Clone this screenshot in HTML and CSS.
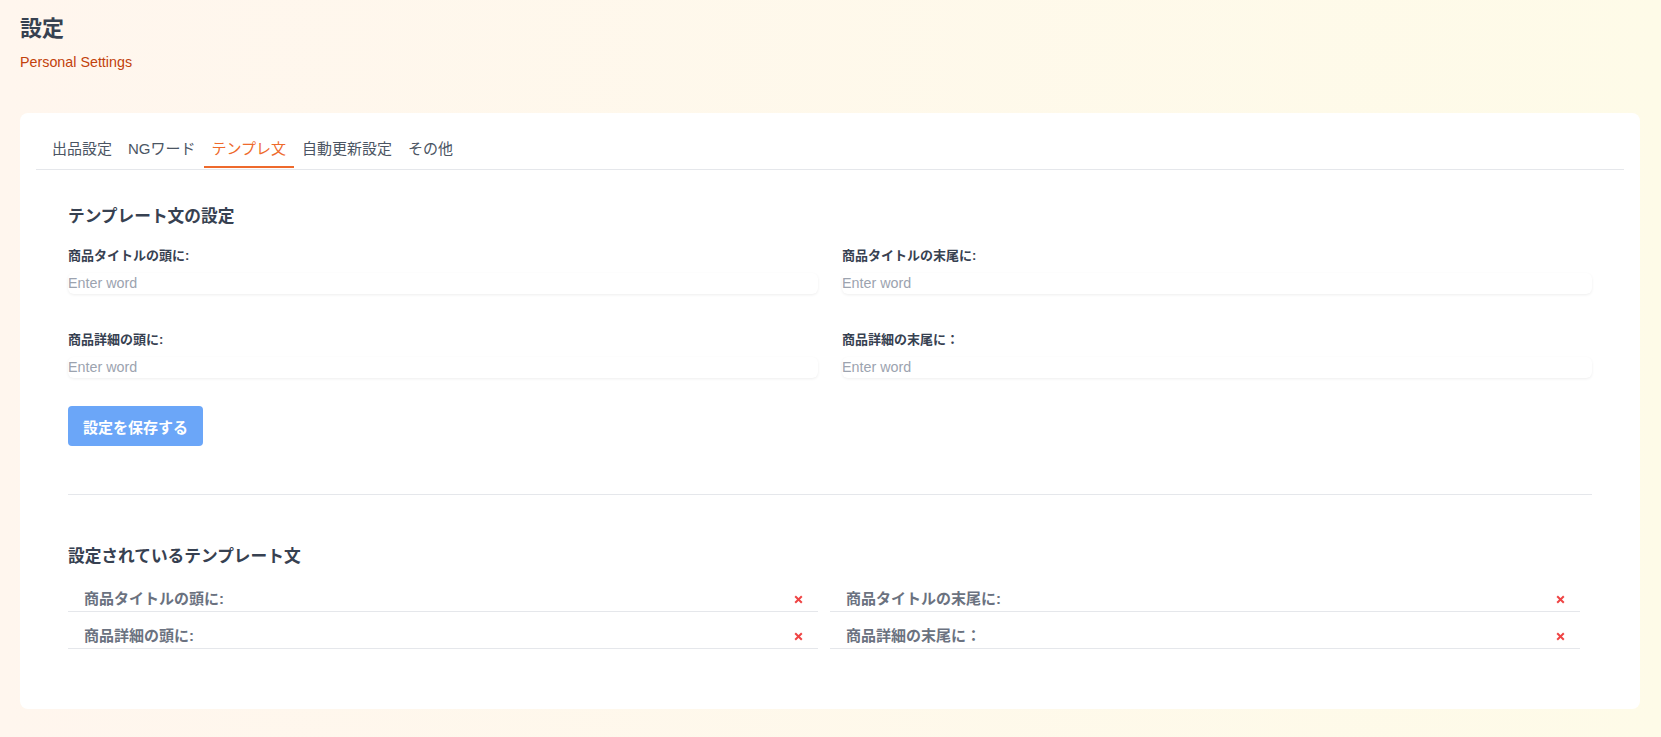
FILE: index.html
```html
<!DOCTYPE html>
<html lang="ja">
<head>
    <meta charset="UTF-8">
    <meta name="viewport" content="width=device-width, initial-scale=1.0">
    <title>設定</title>
    <link rel="stylesheet" href="styles.css">
</head>
<body>
    <div class="page">
        <h1>設定</h1>
        <p class="subtitle">Personal Settings</p>

        <div class="card">
            <div class="tabs">
                <div class="tab">出品設定</div>
                <div class="tab">NGワード</div>
                <div class="tab active">テンプレ文</div>
                <div class="tab">自動更新設定</div>
                <div class="tab">その他</div>
            </div>

            <div class="content">
                <h2>テンプレート文の設定</h2>

                <div class="form-grid">
                    <div class="field">
                        <label>商品タイトルの頭に:</label>
                        <input type="text" placeholder="Enter word">
                    </div>
                    <div class="field">
                        <label>商品タイトルの末尾に:</label>
                        <input type="text" placeholder="Enter word">
                    </div>
                    <div class="field">
                        <label>商品詳細の頭に:</label>
                        <input type="text" placeholder="Enter word">
                    </div>
                    <div class="field">
                        <label>商品詳細の末尾に：</label>
                        <input type="text" placeholder="Enter word">
                    </div>
                </div>

                <button class="save-btn">設定を保存する</button>

                <hr class="divider">

                <h2>設定されているテンプレート文</h2>

                <div class="saved-list">
                    <div class="saved-row">
                        <span>商品タイトルの頭に:</span>
                        <button class="remove-btn"><svg viewBox="0 0 10 10"><path d="M2 2L8 8M8 2L2 8"/></svg></button>
                    </div>
                    <div class="saved-row">
                        <span>商品タイトルの末尾に:</span>
                        <button class="remove-btn"><svg viewBox="0 0 10 10"><path d="M2 2L8 8M8 2L2 8"/></svg></button>
                    </div>
                    <div class="saved-row">
                        <span>商品詳細の頭に:</span>
                        <button class="remove-btn"><svg viewBox="0 0 10 10"><path d="M2 2L8 8M8 2L2 8"/></svg></button>
                    </div>
                    <div class="saved-row">
                        <span>商品詳細の末尾に：</span>
                        <button class="remove-btn"><svg viewBox="0 0 10 10"><path d="M2 2L8 8M8 2L2 8"/></svg></button>
                    </div>
                </div>
            </div>
        </div>
    </div>
</body>
</html>
```

FILE: styles.css
```css
* {
    box-sizing: border-box;
    margin: 0;
    padding: 0;
    font-family: 'Liberation Sans', 'Noto Sans CJK JP', sans-serif;
}

body {
    background: linear-gradient(to right, #fff6ee, #fefbe8);
    min-height: 100vh;
}

.page {
    padding: 15px 21px 28px 20px;
}

h1 {
    color: #374151;
    font-size: 22px;
    font-weight: bold;
    line-height: 28px;
}

.subtitle {
    color: #c2410c;
    font-size: 14.3px;
    line-height: 20px;
    margin-top: 9px;
}

.card {
    background-color: white;
    border-radius: 8px;
    margin-top: 41px;
    padding: 26px 16px 60px;
}

.tabs {
    display: flex;
    padding: 0 0 1px 8px;
    border-bottom: 1px solid #e5e7eb;
}

.tab {
    color: #4b5563;
    font-size: 15px;
    line-height: 20px;
    padding: 0 8px 7px;
    border-bottom: 2px solid transparent;
    cursor: pointer;
}

.tab.active {
    color: #ee6a2c;
    border-bottom-color: #ee6a2c;
}

.content {
    padding: 35px 32px 0;
}

h2 {
    color: #374151;
    font-size: 16.7px;
    font-weight: 600;
    line-height: 24px;
}

.form-grid {
    display: grid;
    grid-template-columns: 1fr 1fr;
    column-gap: 24px;
    row-gap: 36px;
    margin-top: 17px;
}

.field label {
    display: block;
    color: #374151;
    font-size: 13px;
    font-weight: 600;
    line-height: 20px;
    margin-bottom: 7px;
}

.field input {
    display: block;
    width: 100%;
    border: none;
    outline: none;
    border-radius: 6px;
    box-shadow: 0 1px 3px rgba(0, 0, 0, 0.07);
    font-size: 14.3px;
    line-height: 21px;
    height: 21px;
    color: #374151;
    background: white;
}

.field input::placeholder {
    color: #9ca3af;
}

.save-btn {
    margin-top: 28px;
    background-color: #6ba6f8;
    border: none;
    border-radius: 4px;
    color: white;
    font-size: 15px;
    font-weight: bold;
    height: 40px;
    padding: 0 15px;
    cursor: pointer;
}

.divider {
    border: none;
    border-top: 1px solid #e5e7eb;
    margin: 48px 0 50px;
}

.saved-list {
    display: grid;
    grid-template-columns: 1fr 1fr;
    column-gap: 12px;
    padding-right: 12px;
    margin-top: 6px;
}

.saved-row {
    display: flex;
    align-items: center;
    justify-content: space-between;
    padding: 13px 14px 1px 16px;
    border-bottom: 1px solid #e5e7eb;
    color: #6b7280;
    font-size: 15px;
    font-weight: 600;
    line-height: 22px;
}

.remove-btn {
    background: none;
    border: none;
    width: 11px;
    height: 11px;
    cursor: pointer;
    display: flex;
}

.remove-btn svg {
    width: 11px;
    height: 11px;
    stroke: #ef4444;
    stroke-width: 1.8;
    fill: none;
}
```
